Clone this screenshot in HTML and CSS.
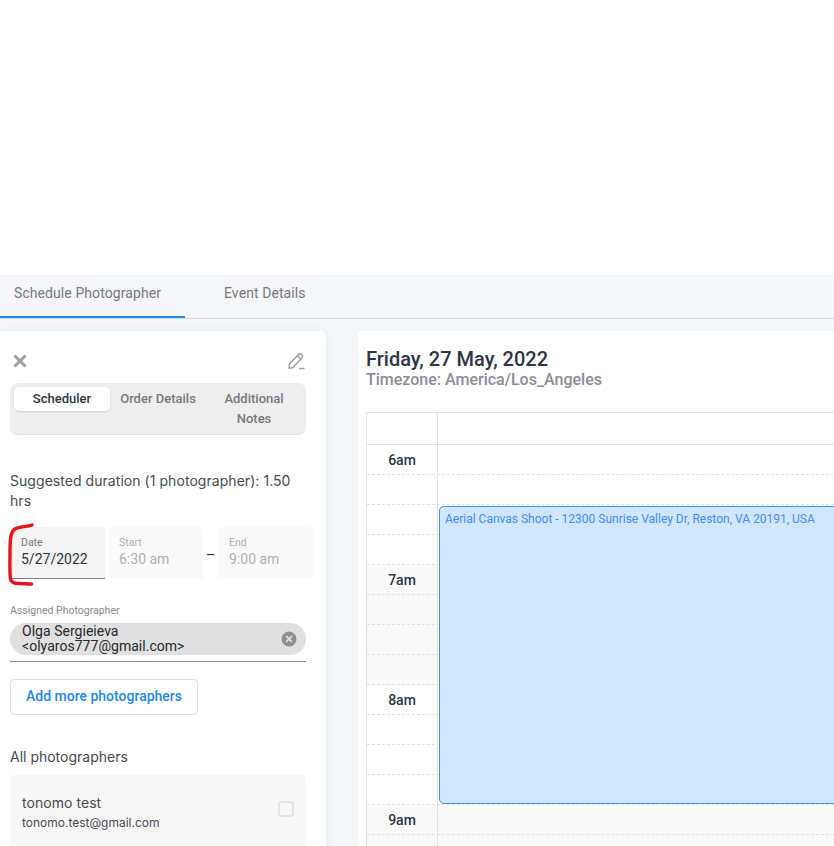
FILE: index.html
```html
<!DOCTYPE html>
<html lang="en">
<head>
    <meta charset="UTF-8">
    <title>Schedule Photographer</title>
    <link rel="stylesheet" href="styles.css">
</head>
<body>
    <div class="top-blank"></div>
    <div class="tabs">
        <div class="tab tab-active">Schedule Photographer</div>
        <div class="tab">Event Details</div>
    </div>
    <div class="main">
        <div class="panel">
            <div class="panel-icons">
                <svg class="icon-close" width="14" height="14" viewBox="0 0 14 14"><path d="M1.500 1.500 12.500 12.500M12.500 1.500 1.500 12.500" stroke="#a0a0a0" stroke-width="3" fill="none"/></svg>
                <svg class="icon-edit" width="18" height="18" viewBox="0 0 18 18"><path d="M1.500 12 10.300 2.800a2.400 2.400 0 0 1 3.500 3.300L5 15.500l-3.800.9zM9.300 4l3.400 3.200M11 16.600h5.500" stroke="#a0a0a0" stroke-width="1.500" fill="none"/></svg>
            </div>
            <div class="segments">
                <div class="segment segment-active">Scheduler</div>
                <div class="segment">Order Details</div>
                <div class="segment">Additional Notes</div>
            </div>
            <p class="duration">Suggested duration (1 photographer): 1.50 hrs</p>
            <div class="date-row">
                <div class="field field-date">
                    <span class="field-label">Date</span>
                    <span class="field-value">5/27/2022</span>
                </div>
                <div class="field field-start">
                    <span class="field-label">Start</span>
                    <span class="field-value">6:30 am</span>
                </div>
                <span class="dash">–</span>
                <div class="field field-end">
                    <span class="field-label">End</span>
                    <span class="field-value">9:00 am</span>
                </div>
                <svg class="scribble" width="30" height="64" viewBox="0 0 30 64"><path d="M25 2C20 4 12 3.500 8 6 3.500 9 3 16 3 30c0 12-.5 20 .5 26 1 4 4 4.500 8 4.500 4 0 9 .5 13 .5" stroke="#e8131b" stroke-width="3.400" stroke-linecap="round" fill="none"/></svg>
            </div>
            <div class="assigned">
                <div class="assigned-label">Assigned Photographer</div>
                <div class="chip-line">
                    <div class="chip">
                        <span class="chip-text">Olga Sergieieva &lt;olyaros777@gmail.com&gt;</span>
                        <svg width="16" height="16" viewBox="0 0 16 16"><circle cx="8" cy="8" r="7.500" fill="#8f8f8f"/><path d="M5.200 5.200 10.800 10.800M10.800 5.200 5.200 10.800" stroke="#e0e0e0" stroke-width="1.800"/></svg>
                    </div>
                </div>
            </div>
            <button class="add-btn">Add more photographers</button>
            <div class="all-label">All photographers</div>
            <div class="person">
                <div>
                    <div class="person-name">tonomo test</div>
                    <div class="person-mail">tonomo.test@gmail.com</div>
                </div>
                <span class="checkbox"></span>
            </div>
        </div>
        <div class="calendar">
            <h2 class="cal-date">Friday, 27 May, 2022</h2>
            <div class="cal-zone">Timezone: America/Los_Angeles</div>
            <div class="grid">
                <div class="row row-head"><div class="time"></div><div class="slot"></div></div>
                <div class="row row-hour"><div class="time">6am</div><div class="slot"></div></div>
                <div class="row"><div class="time"></div><div class="slot"></div></div>
                <div class="row"><div class="time"></div><div class="slot"></div></div>
                <div class="row"><div class="time"></div><div class="slot"></div></div>
                <div class="row row-hour row-gray"><div class="time">7am</div><div class="slot"></div></div>
                <div class="row row-gray"><div class="time"></div><div class="slot"></div></div>
                <div class="row row-gray"><div class="time"></div><div class="slot"></div></div>
                <div class="row row-gray"><div class="time"></div><div class="slot"></div></div>
                <div class="row row-hour"><div class="time">8am</div><div class="slot"></div></div>
                <div class="row"><div class="time"></div><div class="slot"></div></div>
                <div class="row"><div class="time"></div><div class="slot"></div></div>
                <div class="row"><div class="time"></div><div class="slot"></div></div>
                <div class="row row-hour row-gray"><div class="time">9am</div><div class="slot"></div></div>
                <div class="row row-gray"><div class="time"></div><div class="slot"></div></div>
                <div class="event">Aerial Canvas Shoot - 12300 Sunrise Valley Dr, Reston, VA 20191, USA</div>
            </div>
        </div>
    </div>
</body>
</html>
```

FILE: styles.css
```css
html, body {
    height: 100%;
}

body {
    margin: 0;
    height: 846px;
    overflow: hidden;
    background-color: #FFFFFF;
    font-family: Roboto, Arial, sans-serif;
    color: #2f3542;
}

.top-blank {
    height: 275px;
}

.tabs {
    display: flex;
    height: 43px;
    background-color: #f5f6fa;
    border-bottom: 1px solid #d9dce3;
}

.tab {
    font-size: 14px;
    line-height: 36px;
    color: #77797f;
    letter-spacing: 0.08px;
}

.tab:first-child {
    width: 171px;
    padding-left: 14px;
    height: 41px;
    border-bottom: 2px solid #2189e8;
}

.tab:last-child {
    margin-left: 39px;
}

.main {
    display: flex;
    height: 527px;
    padding-top: 12px;
    box-sizing: border-box;
    background-color: #f5f6fa;
}

.panel {
    flex: none;
    width: 326px;
    box-sizing: border-box;
    padding: 20px 20px 0 10px;
    background-color: #FFFFFF;
    border-radius: 0 6px 0 0;
    box-shadow: 0 2px 12px rgba(60, 70, 100, 0.08);
}

.panel-icons {
    display: flex;
    justify-content: space-between;
    align-items: center;
    height: 20px;
    padding: 0 0 0 3px;
}

.segments {
    display: flex;
    margin-top: 12px;
    width: 296px;
    height: 52px;
    box-sizing: border-box;
    padding: 4px;
    background-color: #eeeeee;
    border-radius: 8px;
    border-bottom: 1px solid #e2e2e2;
    font-size: 13px;
    font-weight: 500;
    line-height: 20px;
    color: #77797f;
    text-align: center;
}

.segment {
    flex: 1;
    height: 24px;
    padding-top: 2px;
    box-sizing: border-box;
    white-space: normal;
}

.segment-active {
    color: #2f3542;
    background-color: #FFFFFF;
    border-radius: 5px;
    box-shadow: 0 1px 2px rgba(0, 0, 0, 0.12);
}

.duration {
    margin: 36px 0 0;
    width: 296px;
    font-family: Inter, sans-serif;
    font-size: 14px;
    letter-spacing: 0.05px;
    line-height: 20px;
    color: #484b52;
}

.date-row {
    position: relative;
    display: flex;
    align-items: center;
    margin-top: 16px;
    width: 303px;
}

.field {
    display: flex;
    flex-direction: column;
    height: 52px;
    box-sizing: border-box;
    padding: 10px 10px 0;
    background-color: #fafafa;
    border-radius: 4px 4px 0 0;
    color: #b0b0b0;
}

.field-date {
    width: 95px;
    background-color: #f4f4f4;
    color: #2f3542;
    border-bottom: 1px solid #808080;
    padding-left: 11px;
}

.field-date .field-label {
    color: #77797f;
}

.field-start {
    width: 94px;
    margin-left: 4px;
}

.field-end {
    width: 95px;
    padding-left: 11px;
}

.dash {
    width: 15px;
    padding-top: 4px;
    text-align: center;
    color: #222222;
    font-size: 14px;
}

.field-label {
    font-size: 10.500px;
    line-height: 12px;
}

.field-value {
    font-size: 14px;
    line-height: 20px;
}

.scribble {
    position: absolute;
    left: -3px;
    top: -4px;
}

.assigned {
    margin-top: 25px;
    width: 296px;
}

.assigned-label {
    font-size: 10.500px;
    line-height: 14px;
    color: #8a8a8a;
}

.chip-line {
    margin-top: 5px;
    padding-bottom: 6px;
    border-bottom: 1px solid #8a8a8a;
}

.chip {
    display: flex;
    align-items: center;
    justify-content: space-between;
    height: 32px;
    padding: 0 9px 0 12px;
    background-color: #e0e0e0;
    border-radius: 16px;
}

.chip-text {
    width: 200px;
    font-size: 14px;
    letter-spacing: 0.03px;
    line-height: 15px;
    color: #26282c;
}

.add-btn {
    display: block;
    margin-top: 17px;
    width: 188px;
    height: 36px;
    padding: 0 0 2px;
    background-color: #FFFFFF;
    border: 1px solid #dedede;
    border-radius: 4px;
    font-family: Roboto, Arial, sans-serif;
    font-size: 14px;
    font-weight: 500;
    color: #2189e8;
}

.all-label {
    margin-top: 32px;
    font-family: Inter, sans-serif;
    font-size: 14px;
    line-height: 20px;
    color: #484b52;
}

.person {
    display: flex;
    align-items: flex-start;
    justify-content: space-between;
    margin-top: 8px;
    width: 296px;
    height: 90px;
    box-sizing: border-box;
    padding: 18px 12px 0;
    background-color: #f7f7f8;
    border-radius: 4px;
}

.person-name {
    font-family: Inter, sans-serif;
    font-size: 14px;
    letter-spacing: 0.05px;
    line-height: 20px;
    color: #484b52;
}

.person-mail {
    margin-top: 2px;
    font-family: Inter, sans-serif;
    font-size: 12px;
    line-height: 16px;
    color: #484b52;
}

.checkbox {
    width: 12px;
    height: 12px;
    margin-top: 8px;
    border: 2px solid #e4e4e4;
    border-radius: 3px;
}

.calendar {
    flex: 1;
    margin-left: 32px;
    padding: 16px 0 0 8px;
    background-color: #FFFFFF;
    min-width: 0;
}

.cal-date {
    margin: 0;
    font-size: 20px;
    font-weight: 500;
    line-height: 24px;
    color: #2f3542;
}

.cal-zone {
    font-size: 16px;
    font-weight: 500;
    line-height: 18px;
    color: #8b8e96;
}

.grid {
    position: relative;
    margin-top: 23px;
    border-top: 1px solid #e2e2e2;
    border-left: 1px solid #e2e2e2;
}

.row {
    display: flex;
    height: 30px;
    box-sizing: border-box;
    border-bottom: 1px dashed #e2e2e2;
}

.row-head {
    height: 32px;
    border-bottom: 1px solid #e2e2e2;
}

.row-gray {
    background-color: #fafafa;
}

.time {
    flex: none;
    width: 70px;
    border-right: 1px solid #e2e2e2;
    font-size: 14px;
    font-weight: 500;
    line-height: 30px;
    text-align: center;
    color: #2f3542;
}

.slot {
    flex: 1;
}

.event {
    position: absolute;
    left: 72px;
    right: -20px;
    top: 93px;
    height: 298px;
    box-sizing: border-box;
    padding: 5px 5px;
    background-color: #d1e6ff;
    border: 1px solid #3b96ee;
    border-radius: 5px;
    font-size: 12px;
    line-height: 15px;
    color: #3f8cff;
}
```
